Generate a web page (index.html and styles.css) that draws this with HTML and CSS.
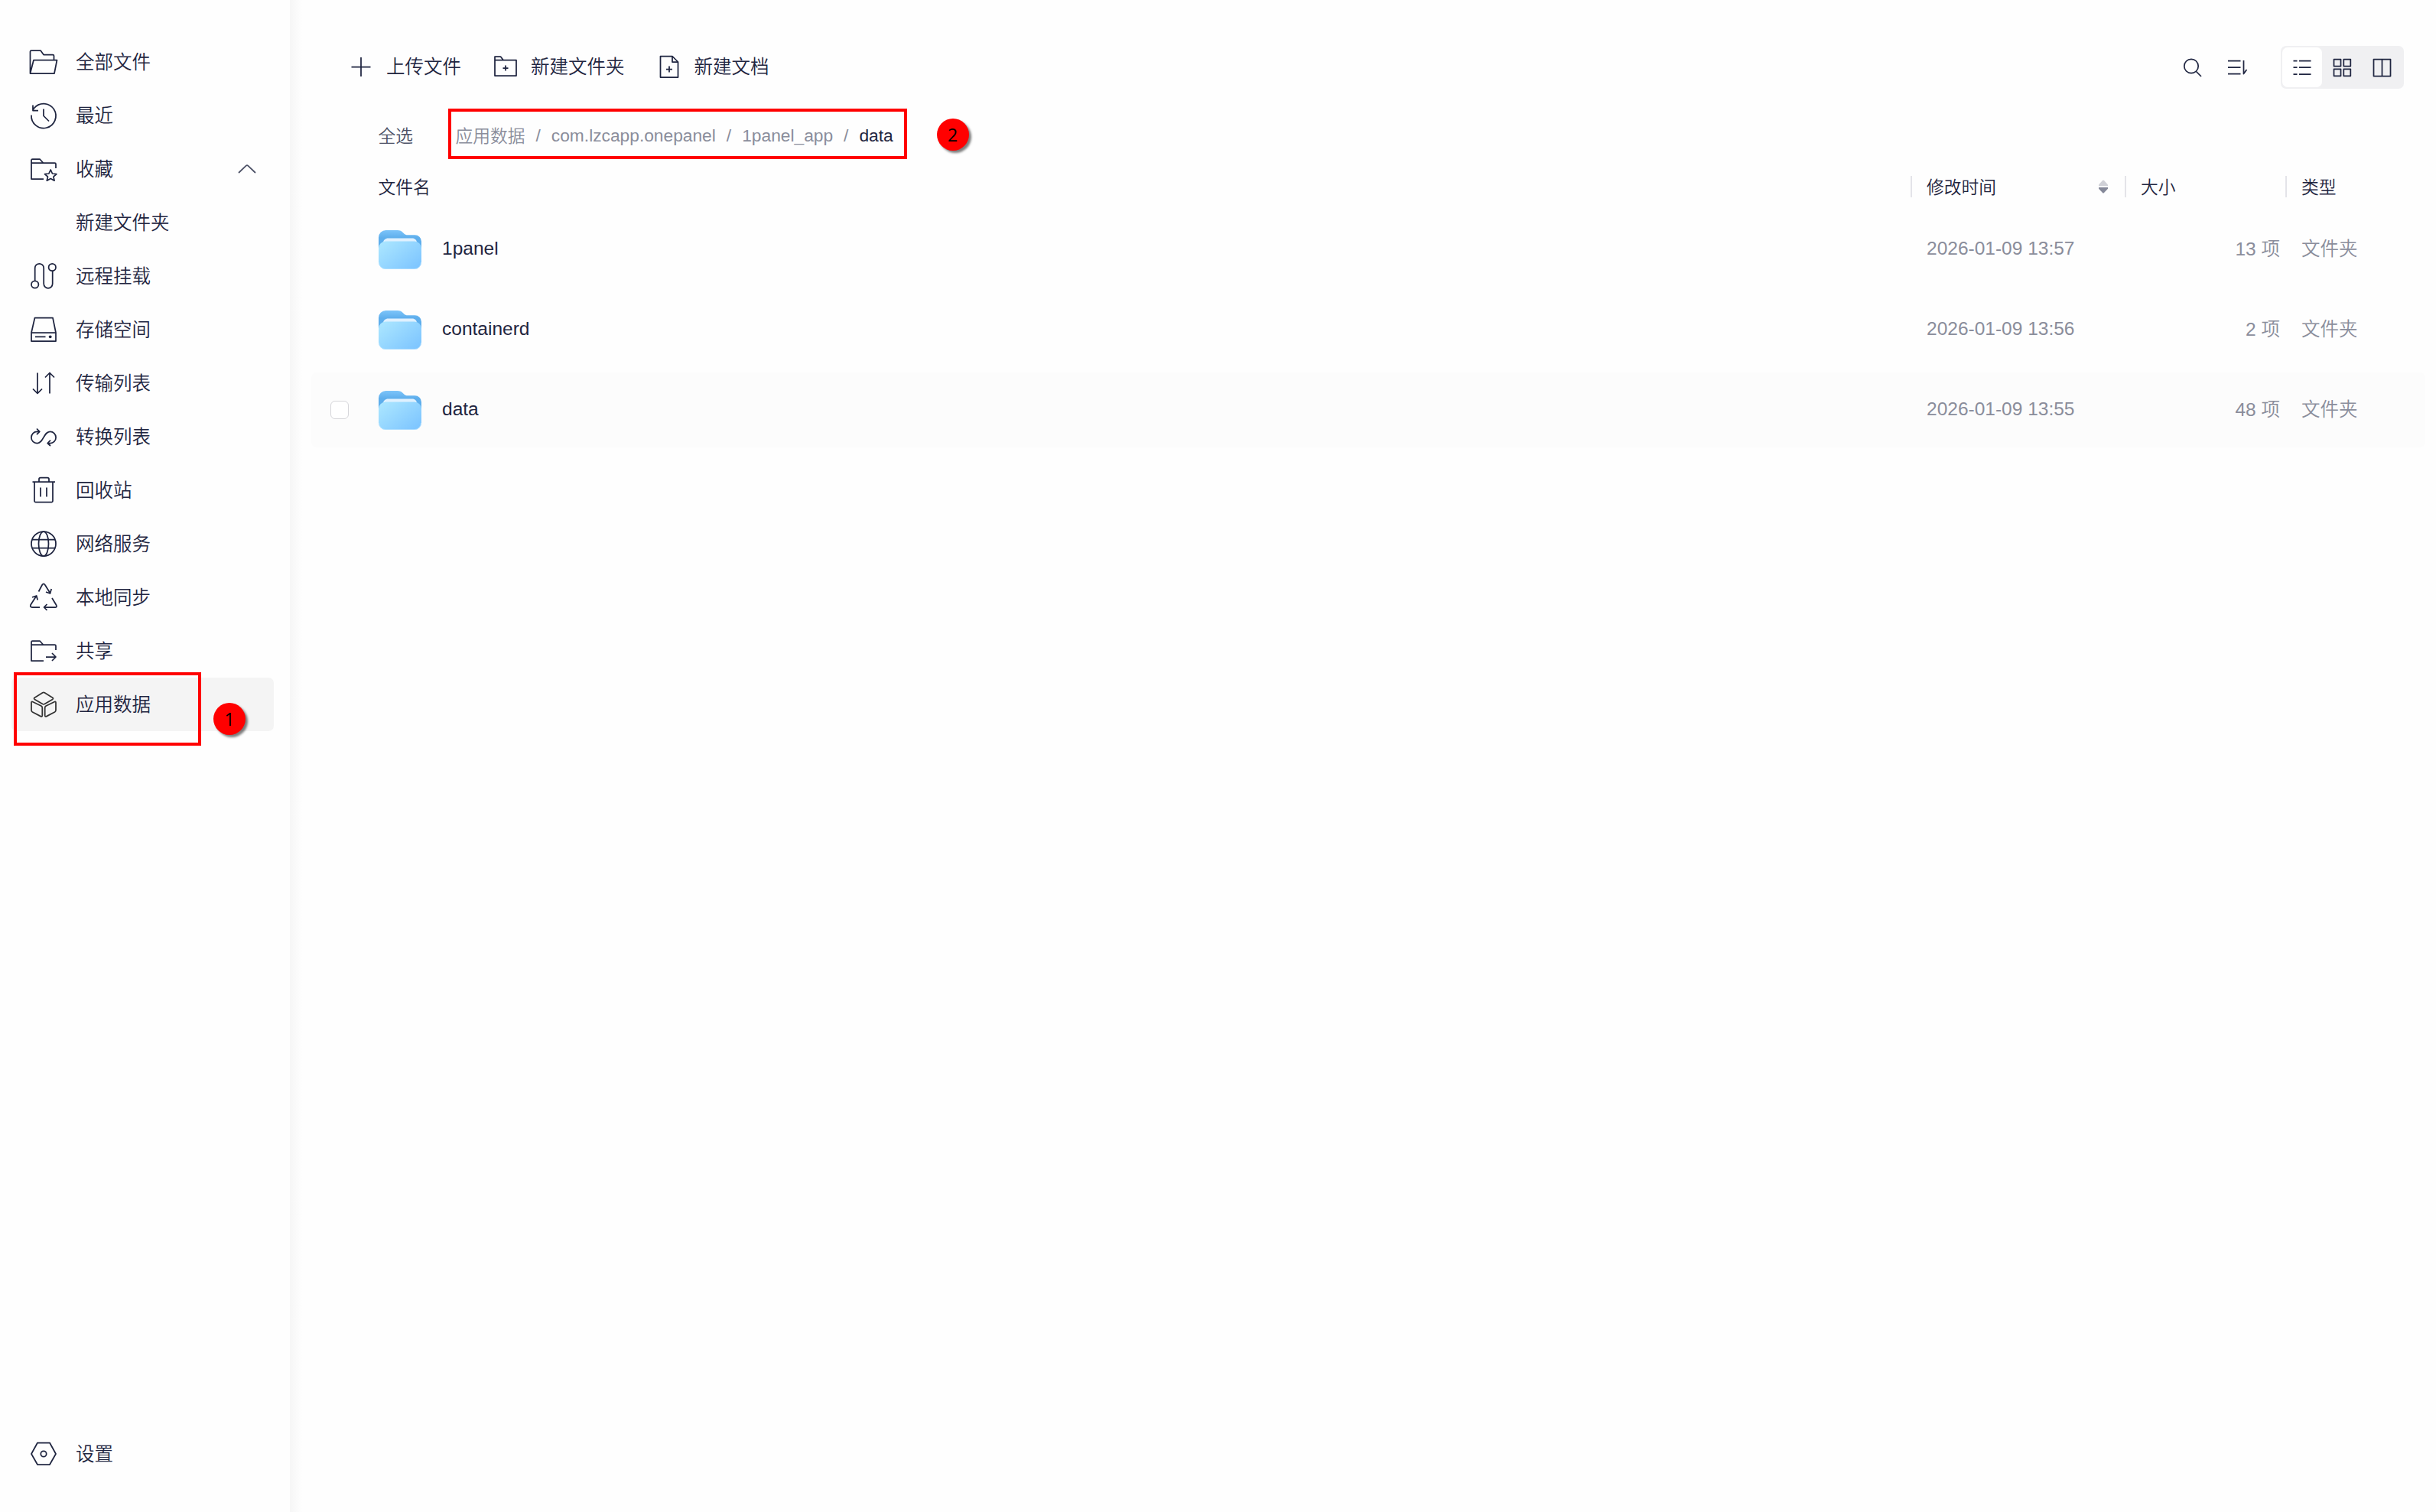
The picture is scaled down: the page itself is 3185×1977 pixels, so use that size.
FILE: index.html
```html
<!DOCTYPE html>
<html lang="zh-CN">
<head>
    <meta charset="UTF-8">
    <meta name="viewport" content="width=device-width, initial-scale=1.0">
    <title>应用数据</title>
    <link rel="stylesheet" href="styles.css">
</head>
<body>
    <!-- 列表共用的文件夹图标 -->
    <svg class="defs" width="0" height="0">
        <defs>
            <linearGradient id="folderBack" x1="0" y1="0" x2="0" y2="1">
                <stop offset="0" stop-color="#7cc4fa"/>
                <stop offset="0.35" stop-color="#5eaeec"/>
                <stop offset="1" stop-color="#5eaeec"/>
            </linearGradient>
            <linearGradient id="folderFront" x1="0" y1="0.1" x2="1" y2="0.9">
                <stop offset="0" stop-color="#abe6ff"/>
                <stop offset="1" stop-color="#7cc4ff"/>
            </linearGradient>
        </defs>
        <symbol id="folder" viewBox="0 0 56 52">
            <path fill="url(#folderBack)" d="M0 10.500a9.500 9.500 0 0 1 9.500-9.500H24.500c3.500 0 5.500 1.200 7.500 3.200l1 1c1.500 1.500 3 2 5 2H47.500a8.500 8.500 0 0 1 8.500 8.500V30H0z"/>
            <path fill="#e0f1ff" d="M6 17.500c0-3.500 3-6 6.500-6H44c3.500 0 6 2.500 6 6v4H6z"/>
            <path fill="url(#folderFront)" d="M0 24.500a9 9 0 0 1 9-9H47a9 9 0 0 1 9 9V43a9 9 0 0 1-9 9H9a9 9 0 0 1-9-9z"/>
            <path fill="none" stroke="#bfe6ff" stroke-width="0.7" d="M0.500 43a8.500 8.500 0 0 0 8.500 8.600H47a8.500 8.500 0 0 0 8.500-8.600"/>
        </symbol>
    </svg>

    <div class="app">
        <!-- 侧边栏 -->
        <aside class="sidebar">
            <nav class="menu">
                <a class="menu-item">
                    <svg class="icon" viewBox="0 0 42 42"><path d="M4.500 36V7.500Q4.500 6 6 6H18l4 5.500H34Q35.500 11.500 35.500 13v5.500M4.500 36L9 18.500H39.500L36 36z"/></svg>
                    <span>全部文件</span>
                </a>
                <a class="menu-item">
                    <svg class="icon" viewBox="0 0 42 42"><path d="M6 20.500A16 16 0 1 0 9.500 11.500L8 14M8 7.500v7h7M22 12.500v9l7 7"/></svg>
                    <span>最近</span>
                </a>
                <a class="menu-item">
                    <svg class="icon" viewBox="0 0 42 42"><path d="M22 34H6V9.500Q6 8 7.500 8H17l4.500 5H36.500Q38 13 38 14.500V20M6 13H22M31.200 22l2.300 5 5.400.5-4 3.600 1.200 5.100-4.900-2.600-4.900 2.600 1.200-5.100-4-3.600 5.400-.5z"/></svg>
                    <span>收藏</span>
                    <svg class="arrow" viewBox="0 0 24 12"><path d="M1 11L10.500 1.800q1.500-1.300 3 0L23 11"/></svg>
                </a>
                <a class="menu-item sub-item"><span>新建文件夹</span></a>
                <a class="menu-item">
                    <svg class="icon" viewBox="0 0 42 42"><circle cx="10.700" cy="32" r="4.700"/><circle cx="33.300" cy="9.500" r="4.700"/><path d="M10.700 27.300V10.500a5.700 5.700 0 0 1 11.500 0V31a5.700 5.700 0 0 0 11.500 0V14.300"/></svg>
                    <span>远程挂载</span>
                </a>
                <a class="menu-item">
                    <svg class="icon" viewBox="0 0 42 42"><path d="M10.500 5.500H34L38 25V36H6V25zM6 25H38M11 30.300H24.500"/><circle class="dot" cx="30.700" cy="30.300" r="1.900"/></svg>
                    <span>存储空间</span>
                </a>
                <a class="menu-item">
                    <svg class="icon" viewBox="0 0 42 42"><path d="M14 7.500V34.500M8 28.500l6 6 6-6M30 34.500V7.500M24 13.500l6-6 6 6"/></svg>
                    <span>传输列表</span>
                </a>
                <a class="menu-item">
                    <svg class="icon" viewBox="0 0 42 42"><path d="M17 14.300H13.500A7.600 7.600 0 1 0 13.500 29.500C22 29.500 22 14.300 30.500 14.300A7.600 7.600 0 1 1 30.500 29.500H27.500M13 10.500l3.800 3.800-3.800 3.800M31 25.700l-3.800 3.800 3.800 3.500"/></svg>
                    <span>转换列表</span>
                </a>
                <a class="menu-item">
                    <svg class="icon" viewBox="0 0 42 42"><path d="M7.500 10H37M16 10V6.500Q16 4.500 18 4.500H27Q29 4.500 29 6.500V10M10 10V35Q10 36.500 11.500 36.500H32.500Q34 36.500 34 35V10M18 17.500V29.500M26 17.500V29.500"/></svg>
                    <span>回收站</span>
                </a>
                <a class="menu-item">
                    <svg class="icon" viewBox="0 0 42 42"><circle cx="22" cy="21" r="16"/><ellipse cx="22" cy="21" rx="6.500" ry="16"/><path d="M7 15.700H37M7 26.500H37"/></svg>
                    <span>网络服务</span>
                </a>
                <a class="menu-item">
                    <svg class="icon" viewBox="0 0 42 42"><path d="M15.500 13.500L20 5Q22 1.500 24 5L30.500 15.500M25 14l5.500 2 1.700-6M33 22L38.500 31Q40 34 37.500 34H22.500M26.500 30l-4 4 4 4M17 34H7Q4 34 5 31L12 20M7 21l5.700-2 1.500 5.500"/></svg>
                    <span>本地同步</span>
                </a>
                <a class="menu-item">
                    <svg class="icon" viewBox="0 0 42 42"><path d="M22 34H6V9.500Q6 8 7.500 8H17l4.500 5H36.500Q38 13 38 14.500V20M6 13H22M25 29H38M33 24l5 5-5 5"/></svg>
                    <span>共享</span>
                </a>
                <a class="menu-item active">
                    <svg class="icon cube" viewBox="0 0 42 42"><path d="M10.300 12.200L20.700 5.700Q22 5 23.300 5.700L33.700 12.200Q35.200 13.300 33.700 14.400L23.300 20.600Q22 21.300 20.700 20.600L10.300 14.400Q8.800 13.300 10.300 12.200z"/><path d="M6 18.800Q6 16.800 8 17.700L18.800 23Q20.300 23.800 20.300 25.500V35.200Q20.300 37.600 18.200 36.600L7.400 31Q6 30.200 6 28.600zM38 18.800Q38 16.800 36 17.700L25.200 23Q23.700 23.800 23.700 25.500V35.200Q23.700 37.600 25.800 36.600L36.600 31Q38 30.200 38 28.600z"/></svg>
                    <span>应用数据</span>
                    <div class="mark-box mark-box-menu"></div>
                    <div class="mark-num mark-num-menu">1</div>
                </a>
            </nav>
            <a class="menu-item">
                <svg class="icon" viewBox="0 0 42 42"><path d="M14 6.500H30L38 21L30 35H14L6 21z"/><circle cx="22" cy="21" r="3.700"/></svg>
                <span>设置</span>
            </a>
        </aside>

        <!-- 内容区域 -->
        <main class="content">
            <div class="toolbar">
                <button class="tool-button">
                    <svg class="icon" viewBox="0 0 42 42"><path d="M21 8V33M8.500 20.500H33.500"/></svg>
                    <span>上传文件</span>
                </button>
                <button class="tool-button">
                    <svg class="icon" viewBox="0 0 42 42"><path d="M7 11.500V7H14.500L18 11.500M7 11.500H35V32H7zM21 18.500v7M17.500 22h7"/></svg>
                    <span>新建文件夹</span>
                </button>
                <button class="tool-button">
                    <svg class="icon" viewBox="0 0 42 42"><path d="M9.500 6.500H25L32.500 14V34H9.500zM25 6.500V14H32.500M21 19.500v8M17 23.500h8"/></svg>
                    <span>新建文档</span>
                </button>
                <div class="tools-right">
                    <svg class="icon" viewBox="0 0 42 42"><circle cx="20" cy="19.500" r="9.200"/><path d="M26.500 26.500l6.500 6.500"/></svg>
                    <svg class="icon" viewBox="0 0 42 42"><path d="M9 12.500H25.500M9 21H25.500M9 29.500H25.500M29.500 12V29.500L33.500 24"/></svg>
                    <div class="view-switch">
                        <div class="view active"><svg class="icon" viewBox="0 0 42 42"><path d="M9.500 12.500H14.500M17 12.500H32.500M9.500 21H14.500M17 21H32.500M9.500 30H14.500M17 30H32.500"/></svg></div>
                        <div class="view"><svg class="icon" viewBox="0 0 42 42"><path d="M9.500 10.500h9v9h-9zM22.300 10.500h9v9h-9zM9.500 23.300h9v9h-9zM22.300 23.300h9v9h-9z"/></svg></div>
                        <div class="view"><svg class="icon" viewBox="0 0 42 42"><path d="M9.500 10.500H31.500V32.500H9.500zM20.500 10.500V32.500"/></svg></div>
                    </div>
                </div>
            </div>

            <!-- 面包屑 -->
            <div class="path-bar">
                <span class="select-all">全选</span>
                <div class="breadcrumb">
                    <span class="cjk">应用数据</span><i>/</i><span>com.lzcapp.onepanel</span><i>/</i><span>1panel_app</span><i>/</i><span class="current">data</span>
                    <div class="mark-box mark-box-path"></div>
                    <div class="mark-num mark-num-path">2</div>
                </div>
            </div>

            <!-- 文件列表 -->
            <div class="list-head">
                <div class="col-name"><span>文件名</span></div>
                <div class="col-time"><span>修改时间</span>
                    <svg class="sort" viewBox="0 0 14 18"><path fill="#d0d1d7" d="M6 1Q7 0 8 1L13 6.500V8.300H1V6.500z"/><path fill="#858999" d="M1 10H13V11.800L8 17Q7 18 6 17L1 11.800z"/></svg>
                </div>
                <div class="col-size"><span>大小</span></div>
                <div class="col-type"><span>类型</span></div>
            </div>
            <div class="list">
                <div class="row">
                    <div class="col-name"><svg class="folder"><use href="#folder"/></svg><span>1panel</span></div>
                    <div class="col-time">2026-01-09 13:57</div>
                    <div class="col-size">13 项</div>
                    <div class="col-type">文件夹</div>
                </div>
                <div class="row">
                    <div class="col-name"><svg class="folder"><use href="#folder"/></svg><span>containerd</span></div>
                    <div class="col-time">2026-01-09 13:56</div>
                    <div class="col-size">2 项</div>
                    <div class="col-type">文件夹</div>
                </div>
                <div class="row hover">
                    <span class="checkbox"></span>
                    <div class="col-name"><svg class="folder"><use href="#folder"/></svg><span>data</span></div>
                    <div class="col-time">2026-01-09 13:55</div>
                    <div class="col-size">48 项</div>
                    <div class="col-type">文件夹</div>
                </div>
            </div>
        </main>
    </div>
</body>
</html>
```
FILE: styles.css
```css
* {
    box-sizing: border-box;
}

body {
    margin: 0;
    height: 100vh;
    overflow: hidden;
    font-family: "Liberation Sans", "Noto Sans CJK SC DemiLight", "Noto Sans CJK SC", sans-serif;
    font-size: 24.5px;
    font-weight: 350;
    color: #1f2540;
    background-color: #fefefe;
}

.defs {
    position: absolute;
}

.app {
    display: flex;
    height: 100vh;
}

.icon {
    width: 42px;
    height: 42px;
    flex: none;
    fill: none;
    stroke: #1f2540;
    stroke-width: 1.75;
    stroke-linejoin: round;
}

.icon .dot {
    fill: #1f2540;
    stroke: none;
}

.icon.cube {
    stroke: #333;
}

/* 侧边栏 */
.sidebar {
    display: flex;
    flex-direction: column;
    justify-content: space-between;
    width: 379px;
    flex: none;
    padding: 46px 21px 41px 15px;
}

.menu {
    display: flex;
    flex-direction: column;
}

.menu-item {
    position: relative;
    display: flex;
    align-items: center;
    height: 70px;
    padding-left: 20px;
    border-radius: 7px;
}

.menu-item .icon {
    margin-right: 22px;
}

.menu-item span {
    padding-bottom: 4px;
}

.menu-item.active {
    background-color: #f4f4f4;
}

.sub-item {
    padding-left: 84px;
}

.arrow {
    width: 24px;
    height: 12px;
    margin-left: auto;
    margin-right: 23px;
    fill: none;
    stroke: #4c5166;
    stroke-width: 1.75;
}

/* 内容区域 */
.content {
    flex: 1;
    padding: 60px 14px 0 28px;
    background: linear-gradient(to right, #f6f6f6, #fafafa 8px, #fefefe 16px);
}

.toolbar {
    display: flex;
    align-items: center;
    height: 56px;
    padding: 0 28px 0 44px;
}

.tool-button {
    display: flex;
    align-items: center;
    gap: 12px;
    padding: 0;
    margin-right: 37px;
    border: none;
    background: none;
    font-family: inherit;
    font-size: 24.5px;
    font-weight: 350;
    color: #1f2540;
}

.tool-button span {
    padding-bottom: 5px;
}

.tools-right {
    display: flex;
    align-items: center;
    gap: 17px;
    margin-left: auto;
}

.view-switch {
    display: flex;
    align-items: center;
    gap: 1px;
    height: 56px;
    width: 161px;
    margin-left: 19px;
    padding: 2px;
    border-radius: 7px;
    background-color: #f0f0f2;
}

.view {
    display: flex;
    align-items: center;
    justify-content: center;
    width: 52px;
    height: 52px;
    border-radius: 7px;
}

.view.active {
    background-color: #fff;
}

.path-bar {
    display: flex;
    align-items: center;
    height: 56px;
    margin-top: 33px;
    padding-left: 87.5px;
    font-size: 22.75px;
}

.select-all {
    padding-bottom: 2px;
    color: #4c5166;
}

.breadcrumb {
    position: relative;
    display: flex;
    align-items: center;
    margin-left: 55.5px;
    color: #8a8d9b;
}

.breadcrumb .cjk {
    padding-bottom: 2px;
}

.breadcrumb i {
    margin: 0 14px;
    font-style: normal;
}

.breadcrumb .current {
    color: #1f2540;
}

.list-head,
.row {
    position: relative;
    display: flex;
    align-items: center;
    padding-left: 88px;
}

.list-head {
    height: 28px;
    margin-top: 25px;
    padding-left: 87.5px;
    font-size: 22.75px;
}

.list-head span {
    padding-bottom: 2px;
}

.list-head .col-time,
.list-head .col-size,
.list-head .col-type {
    display: flex;
    align-items: center;
    height: 28px;
    border-left: 2px solid #e4e4e9;
}

.col-name {
    display: flex;
    align-items: center;
    flex: 1;
}

.col-time {
    width: 280px;
    padding-left: 19px;
}

.col-size {
    width: 210px;
    padding-left: 19px;
}

.col-type {
    width: 183px;
    padding-left: 19px;
}

.sort {
    width: 14px;
    height: 18px;
    margin-left: auto;
    margin-right: 21px;
}

.list {
    display: flex;
    flex-direction: column;
    gap: 7px;
    margin-top: 19px;
}

.row {
    height: 98px;
    border-radius: 7px;
}

.row.hover {
    background-color: #fcfcfc;
}

.row .col-name span {
    padding-bottom: 2px;
}

.row .col-time,
.row .col-size,
.row .col-type {
    padding-left: 21px;
    padding-bottom: 2px;
    color: #8a8d9b;
}

.row .col-size {
    text-align: right;
    padding-right: 7px;
    padding-bottom: 5px;
}

.row .col-type {
    padding-bottom: 5px;
}

.folder {
    width: 56px;
    height: 52px;
    margin-right: 27px;
}

.checkbox {
    position: absolute;
    left: 25px;
    top: 37px;
    width: 24px;
    height: 24px;
    border: 1px solid #d6d6da;
    border-radius: 6px;
    background-color: #fff;
}

/* 标注 */
.mark-box {
    position: absolute;
    border: 4px solid #f00;
}

.mark-box-menu {
    left: 3px;
    top: -7px;
    width: 245px;
    height: 96px;
}

.mark-box-path {
    left: -10px;
    top: 50%;
    width: 600px;
    height: 66px;
    margin-top: -35px;
}

.mark-num {
    position: absolute;
    width: 42px;
    height: 42px;
    border-radius: 50%;
    background-color: #f00;
    color: #000;
    font-family: "Open Sans", "Noto Sans", sans-serif;
    font-size: 23px;
    font-weight: 400;
    line-height: 42px;
    text-align: center;
    box-shadow: 3px 3px 3px rgba(0, 0, 0, 0.5);
}

.mark-num-menu {
    left: 264px;
    top: 33px;
}

.mark-num-path {
    left: 629px;
    top: 50%;
    margin-top: -22px;
}
```
